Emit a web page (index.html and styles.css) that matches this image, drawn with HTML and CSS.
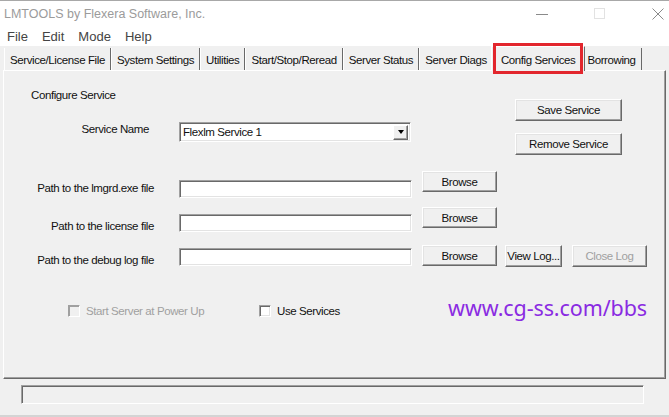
FILE: index.html
```html
<!DOCTYPE html>
<html lang="en">
<head>
    <meta charset="UTF-8">
    <meta name="viewport" content="width=device-width, initial-scale=1.0">
    <title>LMTOOLS</title>
    <link rel="stylesheet" href="styles.css">
</head>
<body>
    <div class="window">
        <!-- Title bar -->
        <div class="titlebar">
            <span class="title">LMTOOLS by Flexera Software, Inc.</span>
            <div class="caption-buttons">
                <svg class="cap-icon" width="12" height="12" viewBox="0 0 12 12"><path d="M0 6.5h12" stroke="#8a8a8a" stroke-width="1"/></svg>
                <svg class="cap-icon" width="12" height="12" viewBox="0 0 12 12"><rect x="0.5" y="0.5" width="10" height="10" fill="none" stroke="#e2e2e2" stroke-width="1"/></svg>
                <svg class="cap-icon" width="12" height="12" viewBox="0 0 12 12"><path d="M0.5 0.5l11 11M11.5 0.5l-11 11" stroke="#8a8a8a" stroke-width="1"/></svg>
            </div>
        </div>

        <!-- Menu -->
        <ul class="menubar">
            <li>File</li>
            <li>Edit</li>
            <li>Mode</li>
            <li>Help</li>
        </ul>

        <!-- Tabs -->
        <div class="tabs">
            <div class="tab">Service/License File</div>
            <div class="tab">System Settings</div>
            <div class="tab">Utilities</div>
            <div class="tab">Start/Stop/Reread</div>
            <div class="tab">Server Status</div>
            <div class="tab">Server Diags</div>
            <div class="tab tab-active">Config Services</div>
            <div class="tab">Borrowing</div>
        </div>

        <!-- Config Services page -->
        <div class="panel">
            <div class="head">
                <div class="head-main">
                    <div class="group-title">Configure Service</div>
                    <div class="service-row">
                        <label class="label label-service">Service Name</label>
                        <div class="combo">
                            <span class="combo-text">Flexlm Service 1</span>
                            <span class="combo-btn"><span class="combo-arrow"></span></span>
                        </div>
                    </div>
                </div>
                <div class="head-actions">
                    <button class="btn btn-wide">Save Service</button>
                    <button class="btn btn-wide">Remove Service</button>
                </div>
            </div>

            <div class="paths">
                <div class="path-row row-lmgrd">
                    <label class="label">Path to the lmgrd.exe file</label>
                    <input class="field" type="text">
                    <button class="btn btn-browse">Browse</button>
                </div>
                <div class="path-row row-license">
                    <label class="label">Path to the license file</label>
                    <input class="field" type="text">
                    <button class="btn btn-browse">Browse</button>
                </div>
                <div class="path-row row-log">
                    <label class="label">Path to the debug log file</label>
                    <input class="field" type="text">
                    <button class="btn btn-browse">Browse</button>
                    <button class="btn btn-view">View Log...</button>
                    <button class="btn btn-close" disabled>Close Log</button>
                </div>
            </div>

            <div class="options">
                <div class="check check-power is-disabled">
                    <span class="check-box"></span>
                    <span>Start Server at Power Up</span>
                </div>
                <div class="check">
                    <span class="check-box"></span>
                    <span>Use Services</span>
                </div>
                <div class="site-link">www.cg-ss.com/bbs</div>
            </div>
        </div>

        <!-- Status bar -->
        <div class="statusbar">
            <div class="status-field"></div>
        </div>
    </div>
</body>
</html>
```

FILE: styles.css
```css
* {
    margin: 0;
    padding: 0;
    box-sizing: border-box;
}

body {
    width: 669px;
    height: 417px;
    overflow: hidden;
    background: #f0f0f0;
    font-family: 'Liberation Sans', Arial, sans-serif;
    font-size: 11.5px;
    letter-spacing: -0.4px;
    color: #111;
}

.window {
    height: 417px;
    display: flex;
    flex-direction: column;
    border-top: 1px solid #a8a8a8;
}

/* Title bar */
.titlebar {
    height: 25px;
    background: #fff;
    display: flex;
    align-items: center;
    padding-left: 4px;
    letter-spacing: 0;
}

.title {
    font-size: 12.5px;
    color: #9b9b9b;
}

.caption-buttons {
    margin-left: auto;
    display: flex;
    align-items: center;
    gap: 46px;
    padding-right: 5px;
}

.cap-icon {
    display: block;
}

/* Menu bar */
.menubar {
    height: 20px;
    background: #fff;
    list-style: none;
    display: flex;
    align-items: center;
    gap: 14px;
    padding-left: 7px;
    font-size: 13px;
    letter-spacing: 0;
    color: #444;
}

/* Tabs */
.tabs {
    height: 24px;
    display: flex;
    align-items: flex-end;
    padding-left: 4px;
    position: relative;
    z-index: 1;
}

.tab {
    height: 22px;
    padding: 4px 5px 0 5px;
    line-height: 16px;
    white-space: nowrap;
    border-left: 1px solid #fff;
    border-right: 1px solid #696969;
}

.tab-active {
    position: relative;
    height: 25px;
    margin: 0 -4px -1px -2px;
    padding: 5px 9px 0 9px;
    background: #f0f0f0;
    border-top: 1px solid #fff;
}

/* red frame drawn round the current tab */
.tab-active::after {
    content: '';
    position: absolute;
    top: -4px;
    left: 1px;
    right: 1px;
    bottom: -3px;
    border: 3px solid #e2262d;
}

/* Tab page */
.panel {
    height: 309px;
    margin: 0 3px;
    border: 1px solid;
    border-color: #fff #696969 #696969 #fff;
    box-shadow: inset -1px -1px #a0a0a0;
}

.head {
    display: flex;
    justify-content: space-between;
    padding-right: 43px;
}

.head-main {
    padding-top: 17px;
}

.group-title {
    margin-left: 27px;
    line-height: 14px;
}

.service-row {
    display: flex;
    margin-top: 20px;
}

.label {
    flex: none;
    width: 150px;
    margin-right: 25px;
    text-align: right;
    line-height: 14px;
    white-space: nowrap;
}

.label-service {
    width: 145px;
    margin-right: 30px;
}

.combo {
    width: 232px;
    height: 20px;
    display: flex;
    align-items: center;
    background: #fff;
    border: 1px solid;
    border-color: #a0a0a0 #fff #fff #a0a0a0;
    box-shadow: inset 1px 1px #696969, inset -1px -1px #e3e3e3;
    padding: 0 2px 0 3px;
}

.combo-text {
    flex: 1;
}

.combo-btn {
    width: 15px;
    height: 15px;
    display: flex;
    align-items: center;
    justify-content: center;
    background: #f0f0f0;
    border: 1px solid;
    border-color: #fff #696969 #696969 #fff;
    box-shadow: inset -1px -1px #a0a0a0;
}

.combo-arrow {
    width: 0;
    height: 0;
    border-left: 3.5px solid transparent;
    border-right: 3.5px solid transparent;
    border-top: 4px solid #000;
}

.head-actions {
    display: flex;
    flex-direction: column;
    gap: 12px;
    padding-top: 28px;
}

/* Buttons */
.btn {
    font: inherit;
    letter-spacing: inherit;
    color: #111;
    background: #f0f0f0;
    border: 1px solid;
    border-color: #fff #696969 #696969 #fff;
    box-shadow: inset -1px -1px #a0a0a0, inset 1px 1px #e3e3e3;
    flex: none;
}

.btn:disabled {
    color: #a0a0a0;
}

.btn-wide {
    width: 107px;
    height: 22px;
}

.btn-browse {
    width: 75px;
    height: 21px;
}

.btn-view {
    width: 57px;
    height: 22px;
    margin-left: 8px;
}

.btn-close {
    width: 75px;
    height: 22px;
    margin-left: 10px;
}

/* Path rows */
.paths {
    margin-top: 16px;
}

.path-row {
    display: flex;
    align-items: flex-start;
}

.field {
    flex: none;
    width: 233px;
    height: 18px;
    margin-right: 10px;
    background: #fff;
    border: 1px solid;
    border-color: #a0a0a0 #fff #fff #a0a0a0;
    box-shadow: inset 1px 1px #696969, inset -1px -1px #e3e3e3;
    outline: none;
}

.row-lmgrd {
    height: 36px;
}

.row-lmgrd .field {
    margin-top: 9px;
}

.row-lmgrd .label {
    margin-top: 10px;
}

.row-license {
    height: 38px;
}

.row-license .field {
    margin-top: 7px;
}

.row-license .label {
    margin-top: 12px;
}

.row-log .field {
    margin-top: 3px;
}

.row-log .label {
    margin-top: 8px;
}

/* Options */
.options {
    display: flex;
    align-items: center;
    height: 30px;
    margin-top: 26px;
}

.check {
    display: flex;
    align-items: center;
    gap: 6px;
    margin-top: 5px;
}

.check-power {
    width: 191px;
    margin-left: 64px;
}

.check-box {
    width: 12px;
    height: 12px;
    background: #fff;
    border: 1px solid;
    border-color: #a0a0a0 #fff #fff #a0a0a0;
    box-shadow: inset 1px 1px #696969, inset -1px -1px #e3e3e3;
}

.is-disabled {
    color: #a0a0a0;
}

.is-disabled .check-box {
    background: #f0f0f0;
    box-shadow: inset 1px 1px #a0a0a0;
}

.site-link {
    margin-left: auto;
    margin-right: 18px;
    font-family: 'Noto Sans', 'Open Sans', sans-serif;
    font-size: 21.5px;
    letter-spacing: -0.1px;
    line-height: 30px;
    color: #8a2be2;
}

/* Status bar */
.statusbar {
    flex: 1;
    padding-top: 6px;
    border-bottom: 2px solid #d4d4d4;
}

.status-field {
    height: 19px;
    margin: 0 25px 0 21px;
    border: 1px solid;
    border-color: #a0a0a0 #fff #fff #a0a0a0;
    box-shadow: inset 1px 1px #696969;
}
```
